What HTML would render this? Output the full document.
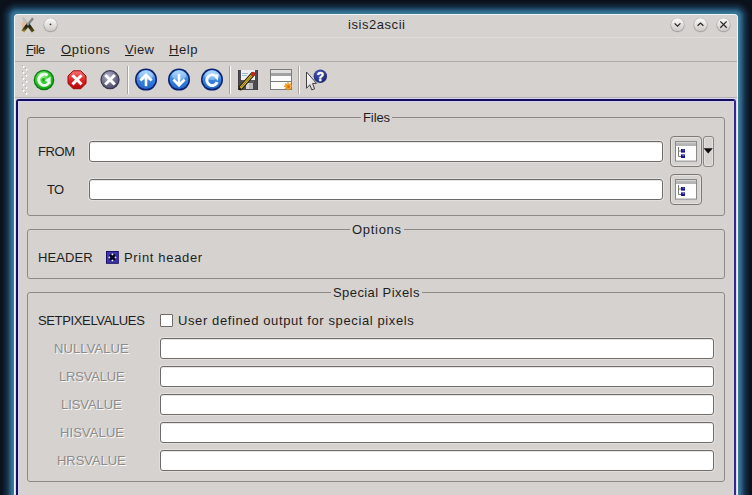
<!DOCTYPE html>
<html><head><meta charset="utf-8">
<style>
html,body{margin:0;padding:0;}
body{width:752px;height:495px;overflow:hidden;position:relative;background:#0b1119;font-family:"Liberation Sans",sans-serif;font-size:13px;color:#1e1e1e;}
.a{position:absolute;}
.t{position:absolute;white-space:nowrap;line-height:16px;height:16px;}
#win{left:14px;top:14px;width:724px;height:500px;box-sizing:border-box;background:#d6d2d0;border:1px solid #eef4f8;border-bottom:none;border-radius:4px 4px 0 0;}
.gb{position:absolute;border:1px solid #8d8985;border-radius:3px;}
.gt{position:absolute;background:#d6d2d0;padding:0 2px;white-space:nowrap;line-height:16px;}
.le{position:absolute;background:#fff;border:1px solid #6e6b68;border-radius:3px;box-sizing:border-box;box-shadow:0 0 0 1px #e2dfdd, inset 0 1px 0 #e6e6e6;}
.dis{color:#8e8a87;text-shadow:1px 1px 0 #fafafa;}
</style></head><body>
<!--glow-->
<div class="a" style="left:0;top:17px;width:14px;height:478px;background:linear-gradient(to left,#3c7a96 0.5px,#367294 1.5px,#30698a 2.5px,#2a5e80 3.5px,#235070 4.5px,#1c425e 5.5px,#183650 6.5px,#152c42 7.5px,#132638 8.5px,#112030 9.5px,#0f1a28 10.5px,#0d1622 11.5px,#0c131e 12.5px,#0b111a 13.5px)"></div>
<div class="a" style="left:738px;top:17px;width:14px;height:478px;background:linear-gradient(to right,#3c7a96 0.5px,#367294 1.5px,#30698a 2.5px,#2a5e80 3.5px,#235070 4.5px,#1c425e 5.5px,#183650 6.5px,#152c42 7.5px,#132638 8.5px,#112030 9.5px,#0f1a28 10.5px,#0d1622 11.5px,#0c131e 12.5px,#0b111a 13.5px)"></div>
<div class="a" style="left:17px;top:0;width:718px;height:14px;background:linear-gradient(to top,#3c7a96 0.5px,#367294 1.5px,#30698a 2.5px,#2a5e80 3.5px,#235070 4.5px,#1c425e 5.5px,#183650 6.5px,#152c42 7.5px,#132638 8.5px,#112030 9.5px,#0f1a28 10.5px,#0d1622 11.5px,#0c131e 12.5px,#0b111a 13.5px)"></div>
<div class="a" style="left:0;top:0;width:17px;height:17px;background:radial-gradient(circle at 17px 17px,#3c7a96 3.5px,#367294 4.5px,#30698a 5.5px,#2a5e80 6.5px,#235070 7.5px,#1c425e 8.5px,#183650 9.5px,#152c42 10.5px,#132638 11.5px,#112030 12.5px,#0f1a28 13.5px,#0d1622 14.5px,#0c131e 15.5px,#0b111a 16.5px)"></div>
<div class="a" style="left:735px;top:0;width:17px;height:17px;background:radial-gradient(circle at 0px 17px,#3c7a96 3.5px,#367294 4.5px,#30698a 5.5px,#2a5e80 6.5px,#235070 7.5px,#1c425e 8.5px,#183650 9.5px,#152c42 10.5px,#132638 11.5px,#112030 12.5px,#0f1a28 13.5px,#0d1622 14.5px,#0c131e 15.5px,#0b111a 16.5px)"></div>
<div id="win" class="a"></div>
<!-- window top edge highlight -->

<!-- title bar -->
<div class="a" style="left:15px;top:37px;width:722px;height:1px;background:#dfdcda;"></div>
<svg class="a" style="left:18px;top:15px" width="20" height="20" viewBox="0 0 20 20">
  <defs>
    <linearGradient id="xb" x1="0" y1="0" x2="0" y2="1"><stop offset="0" stop-color="#1c1c10"/><stop offset="0.55" stop-color="#3a3414"/><stop offset="1" stop-color="#b49a30"/></linearGradient>
    <linearGradient id="xa" x1="0" y1="0" x2="0" y2="1"><stop offset="0" stop-color="#161610"/><stop offset="1" stop-color="#5a5018"/></linearGradient>
  </defs>
  <ellipse cx="5.6" cy="10" rx="2" ry="3.4" fill="#f0ae80" opacity="0.65"/>
  <path d="M4.8 2.8 L10 9.5" stroke="#b8b0a8" stroke-width="2.4" opacity="0.6"/>
  <path d="M15 3.2 L10 9.5" stroke="#5a6262" stroke-width="2.2" opacity="0.7"/>
  <path d="M10 9.5 L15.2 16.6" stroke="url(#xa)" stroke-width="3.4"/>
  <path d="M10 9.5 L4.8 16.6" stroke="url(#xb)" stroke-width="3.4"/>
  <circle cx="10" cy="9.3" r="1.2" fill="#7c9aa4"/>
</svg>
<svg class="a" style="left:42px;top:17px" width="17" height="17" viewBox="0 0 17 17">
  <defs><linearGradient id="bg" x1="0" y1="0" x2="0" y2="1"><stop offset="0" stop-color="#fbfbfa"/><stop offset="1" stop-color="#cdc9c6"/></linearGradient></defs>
  <circle cx="8.5" cy="8.1" r="7.2" fill="#989592" opacity="0.7"/>
  <circle cx="8.5" cy="7.6" r="6.4" fill="url(#bg)"/>
  <circle cx="8.5" cy="7.3" r="0.9" fill="#333"/>
</svg>
<div class="t" style="left:348px;top:17px;letter-spacing:0.55px">isis2ascii</div>
<svg class="a" style="left:669px;top:17px" width="17" height="17" viewBox="0 0 17 17">
  <circle cx="8.5" cy="8.1" r="7.2" fill="#989592" opacity="0.7"/>
  <circle cx="8.5" cy="7.6" r="6.4" fill="url(#bg)"/>
  <path d="M5.6 6.4 L8.5 9.2 L11.4 6.4" stroke="#262626" stroke-width="1.25" fill="none"/>
</svg>
<svg class="a" style="left:692px;top:17px" width="17" height="17" viewBox="0 0 17 17">
  <circle cx="8.5" cy="8.1" r="7.2" fill="#989592" opacity="0.7"/>
  <circle cx="8.5" cy="7.6" r="6.4" fill="url(#bg)"/>
  <path d="M5.6 8.8 L8.5 6 L11.4 8.8" stroke="#262626" stroke-width="1.25" fill="none"/>
</svg>
<svg class="a" style="left:715px;top:17px" width="17" height="17" viewBox="0 0 17 17">
  <circle cx="8.5" cy="8.1" r="7.2" fill="#989592" opacity="0.7"/>
  <circle cx="8.5" cy="7.6" r="6.4" fill="url(#bg)"/>
  <path d="M5.3 4.4 L11.7 10.8 M11.7 4.4 L5.3 10.8" stroke="#262626" stroke-width="1.25" fill="none"/>
</svg>

<!-- menu bar -->
<div class="t" style="left:26px;top:42px;letter-spacing:-0.6px"><u>F</u>ile</div>
<div class="t" style="left:61px;top:42px;letter-spacing:0.67px"><u>O</u>ptions</div>
<div class="t" style="left:125px;top:42px;letter-spacing:0.33px"><u>V</u>iew</div>
<div class="t" style="left:169px;top:42px;letter-spacing:0.6px"><u>H</u>elp</div>
<div class="a" style="left:15px;top:61px;width:722px;height:1px;background:#b0aca9;"></div>

<!-- toolbar -->
<svg class="a" style="left:0;top:0" width="360" height="100" viewBox="0 0 360 100">
<defs>
 <radialGradient id="gG" cx="0.4" cy="0.3" r="0.7"><stop offset="0" stop-color="#9af29a"/><stop offset="0.5" stop-color="#3ad03a"/><stop offset="1" stop-color="#14a814"/></radialGradient>
 <linearGradient id="gR" x1="0" y1="0" x2="0" y2="1"><stop offset="0" stop-color="#f87070"/><stop offset="0.55" stop-color="#e02020"/><stop offset="1" stop-color="#b00808"/></linearGradient>
 <radialGradient id="gS" cx="0.4" cy="0.3" r="0.75"><stop offset="0" stop-color="#b4b4cc"/><stop offset="0.6" stop-color="#70708c"/><stop offset="1" stop-color="#4a4a64"/></radialGradient>
 <linearGradient id="gB" x1="0" y1="0" x2="0" y2="1"><stop offset="0" stop-color="#9ad0ff"/><stop offset="0.5" stop-color="#3a84dc"/><stop offset="1" stop-color="#2468c8"/></linearGradient>
 <radialGradient id="gQ" cx="0.4" cy="0.3" r="0.8"><stop offset="0" stop-color="#4a5ab8"/><stop offset="1" stop-color="#141c68"/></radialGradient>
 <linearGradient id="gF" x1="0" y1="0" x2="0" y2="1"><stop offset="0" stop-color="#505258"/><stop offset="1" stop-color="#2a2a2e"/></linearGradient>
</defs>
<rect x="22" y="65" width="1" height="1" fill="#a8a4a0"/><rect x="23" y="65" width="1" height="1" fill="#e4e2e0"/><rect x="22" y="66" width="1" height="1" fill="#e0dedc"/><rect x="23" y="66" width="1" height="2" fill="#ffffff"/><rect x="24" y="66" width="1" height="1" fill="#eceae8"/><rect x="25" y="68" width="1" height="1" fill="#a8a4a0"/><rect x="26" y="68" width="1" height="1" fill="#e4e2e0"/><rect x="25" y="69" width="1" height="1" fill="#e0dedc"/><rect x="26" y="69" width="1" height="2" fill="#ffffff"/><rect x="27" y="69" width="1" height="1" fill="#eceae8"/><rect x="22" y="71" width="1" height="1" fill="#a8a4a0"/><rect x="23" y="71" width="1" height="1" fill="#e4e2e0"/><rect x="22" y="72" width="1" height="1" fill="#e0dedc"/><rect x="23" y="72" width="1" height="2" fill="#ffffff"/><rect x="24" y="72" width="1" height="1" fill="#eceae8"/><rect x="25" y="74" width="1" height="1" fill="#a8a4a0"/><rect x="26" y="74" width="1" height="1" fill="#e4e2e0"/><rect x="25" y="75" width="1" height="1" fill="#e0dedc"/><rect x="26" y="75" width="1" height="2" fill="#ffffff"/><rect x="27" y="75" width="1" height="1" fill="#eceae8"/><rect x="22" y="77" width="1" height="1" fill="#a8a4a0"/><rect x="23" y="77" width="1" height="1" fill="#e4e2e0"/><rect x="22" y="78" width="1" height="1" fill="#e0dedc"/><rect x="23" y="78" width="1" height="2" fill="#ffffff"/><rect x="24" y="78" width="1" height="1" fill="#eceae8"/><rect x="25" y="80" width="1" height="1" fill="#a8a4a0"/><rect x="26" y="80" width="1" height="1" fill="#e4e2e0"/><rect x="25" y="81" width="1" height="1" fill="#e0dedc"/><rect x="26" y="81" width="1" height="2" fill="#ffffff"/><rect x="27" y="81" width="1" height="1" fill="#eceae8"/><rect x="22" y="83" width="1" height="1" fill="#a8a4a0"/><rect x="23" y="83" width="1" height="1" fill="#e4e2e0"/><rect x="22" y="84" width="1" height="1" fill="#e0dedc"/><rect x="23" y="84" width="1" height="2" fill="#ffffff"/><rect x="24" y="84" width="1" height="1" fill="#eceae8"/><rect x="25" y="86" width="1" height="1" fill="#a8a4a0"/><rect x="26" y="86" width="1" height="1" fill="#e4e2e0"/><rect x="25" y="87" width="1" height="1" fill="#e0dedc"/><rect x="26" y="87" width="1" height="2" fill="#ffffff"/><rect x="27" y="87" width="1" height="1" fill="#eceae8"/><rect x="22" y="89" width="1" height="1" fill="#a8a4a0"/><rect x="23" y="89" width="1" height="1" fill="#e4e2e0"/><rect x="22" y="90" width="1" height="1" fill="#e0dedc"/><rect x="23" y="90" width="1" height="2" fill="#ffffff"/><rect x="24" y="90" width="1" height="1" fill="#eceae8"/><rect x="25" y="92" width="1" height="1" fill="#a8a4a0"/><rect x="26" y="92" width="1" height="1" fill="#e4e2e0"/><rect x="25" y="93" width="1" height="1" fill="#e0dedc"/><rect x="26" y="93" width="1" height="2" fill="#ffffff"/><rect x="27" y="93" width="1" height="1" fill="#eceae8"/>
<!-- separators -->
<rect x="127" y="66" width="1" height="28" fill="#a8a4a0"/><rect x="128" y="66" width="1" height="28" fill="#fbfbfb"/>
<rect x="229" y="66" width="1" height="28" fill="#a8a4a0"/><rect x="230" y="66" width="1" height="28" fill="#fbfbfb"/>
<rect x="298" y="66" width="1" height="28" fill="#a8a4a0"/><rect x="299" y="66" width="1" height="28" fill="#fbfbfb"/>
<!-- green -->
<circle cx="44" cy="80" r="10.3" fill="#0a7c0e"/>
<circle cx="44" cy="80" r="9" fill="url(#gG)"/>
<path d="M47.6 75.2 A5.6 5.6 0 1 0 49.4 82.2" stroke="#eefcee" stroke-width="2.9" fill="none"/>
<path d="M44.8 80.2 L50.6 76.6 L50.6 84.4 Z" fill="#eefcee"/>
<circle cx="43.4" cy="79.8" r="1.9" fill="#22b022"/>
<!-- red octagon -->
<path d="M73.3 70.8 L80.7 70.8 L86 76 L86 83.5 L80.7 88.7 L73.3 88.7 L68 83.5 L68 76 Z" fill="url(#gR)" stroke="#9a0a0a" stroke-width="1"/>
<path d="M73.5 76.3 L80.5 83.3 M80.5 76.3 L73.5 83.3" stroke="#fff" stroke-width="3" stroke-linecap="square"/>
<!-- slate -->
<circle cx="110" cy="79.7" r="9.6" fill="#34344e"/>
<circle cx="110" cy="79.7" r="8.5" fill="url(#gS)"/>
<path d="M106.3 76 L113.7 83.4 M113.7 76 L106.3 83.4" stroke="#fff" stroke-width="3" stroke-linecap="square"/>
<!-- blue up -->
<circle cx="146" cy="79.6" r="11" fill="#0a2274"/>
<circle cx="146" cy="79.6" r="9.5" fill="url(#gB)"/>
<ellipse cx="146" cy="75.5" rx="7" ry="4.5" fill="#c8ecff" opacity="0.45"/>
<path d="M146 86.2 L146 76.5" stroke="#fff" stroke-width="2.6"/>
<path d="M140.4 80.6 L146 75 L151.6 80.6" stroke="#fff" stroke-width="2.8" fill="none"/>
<!-- blue down -->
<circle cx="179" cy="79.6" r="11" fill="#0a2274"/>
<circle cx="179" cy="79.6" r="9.5" fill="url(#gB)"/>
<ellipse cx="179" cy="75.5" rx="7" ry="4.5" fill="#c8ecff" opacity="0.45"/>
<path d="M179 73.8 L179 83.5" stroke="#fff" stroke-width="2.6"/>
<path d="M173.4 79.6 L179 85.2 L184.6 79.6" stroke="#fff" stroke-width="2.8" fill="none"/>
<!-- blue refresh -->
<circle cx="212" cy="79.6" r="11" fill="#0a2274"/>
<circle cx="212" cy="79.6" r="9.5" fill="url(#gB)"/>
<ellipse cx="212" cy="75.5" rx="7" ry="4.5" fill="#c8ecff" opacity="0.45"/>
<path d="M214.5 75.2 A5.4 5.4 0 1 0 217.2 82.2" stroke="#f2f8ff" stroke-width="3" fill="none"/>
<path d="M212.6 74.6 L218.6 74.2 L217.8 81 Z" fill="#f2f8ff"/>
<!-- floppy -->
<g shape-rendering="crispEdges">
<rect x="238" y="70" width="20" height="20" fill="#3c3c42"/>
<rect x="239" y="70" width="18" height="20" fill="#4a4a50"/>
<rect x="241" y="70" width="14" height="10" fill="#eef2f4"/>
<rect x="242" y="73" width="6" height="1" fill="#9ab8d8"/><rect x="242" y="75" width="5" height="1" fill="#9ab8d8"/>
<rect x="242" y="80" width="12" height="3" fill="#5a5a60"/>
<rect x="246" y="83" width="7" height="6" fill="#b8b8b8"/>
<rect x="246" y="83" width="3" height="6" fill="#d4d4d4"/>
</g>
<path d="M240.5 88 L252.5 74.5" stroke="#241e08" stroke-width="4.6" stroke-linecap="round"/>
<path d="M240.5 88 L252.5 74.5" stroke="#e0c030" stroke-width="2.6"/>
<path d="M240.8 87.6 L252.2 74.9" stroke="#6a5410" stroke-width="0.8"/>
<circle cx="253" cy="74" r="2.3" fill="#b82a1a"/>
<!-- form -->
<g shape-rendering="crispEdges">
<rect x="270" y="69" width="22" height="21" fill="#7c7c7c"/>
<rect x="271" y="70" width="20" height="19" fill="#fcfcfc"/>
<rect x="271" y="70" width="20" height="3" fill="#dedede"/>
<rect x="271" y="73" width="20" height="3" fill="#a2a2a2"/>
<rect x="271" y="81" width="20" height="1" fill="#7c7c7c"/>
</g>
<circle cx="288" cy="86.3" r="2.6" fill="#f29a18"/>
<path d="M288 82.3 L288 90.3 M284 86.3 L292 86.3 M285.2 83.5 L290.8 89.1 M290.8 83.5 L285.2 89.1" stroke="#f0a020" stroke-width="1.6"/>
<circle cx="288.5" cy="86.8" r="1.3" fill="#e06a10"/>
<!-- whats this -->
<defs><linearGradient id="gC" x1="0" y1="0" x2="1" y2="1"><stop offset="0" stop-color="#ffffff"/><stop offset="1" stop-color="#cfcfcf"/></linearGradient></defs>
<path d="M306.5 72 L316.5 83.3 L312.6 83.6 L314.6 88.8 L311.8 89.9 L309.8 84.8 L306.5 88.3 Z" fill="url(#gC)" stroke="#404040" stroke-width="1" stroke-linejoin="round"/>
<circle cx="320.3" cy="76.3" r="6.7" fill="url(#gQ)"/>
<text x="320.5" y="80.8" font-family="Liberation Sans" font-weight="bold" font-size="12" fill="#fff" stroke="#fff" stroke-width="0.5" text-anchor="middle">?</text>
</svg>
<div class="a" style="left:15px;top:97px;width:722px;height:1px;background:#b4b0ad;"></div>

<!-- main frame -->
<div class="a" style="left:15px;top:98px;width:722px;height:400px;box-sizing:border-box;border:1px solid #dcd6f6;"></div>
<div class="a" style="left:16px;top:99px;width:720px;height:400px;box-sizing:border-box;border:2px solid #120e5c;border-right-color:#34288a;border-radius:3px;"></div>
<div class="a" style="left:18px;top:101px;width:716px;height:400px;box-sizing:border-box;border:1px solid #d8d0f4;"></div>

<!-- Files group -->
<div class="gb" style="left:27px;top:117px;width:696px;height:97px;"></div>
<div class="gt" style="left:361px;top:110px;letter-spacing:-0.1px">Files</div>
<div class="t" style="left:38px;top:144px;letter-spacing:-0.4px">FROM</div>
<div class="le" style="left:89px;top:141px;width:574px;height:21px;"></div>

<div class="a" style="left:670px;top:136px;width:32px;height:31px;box-sizing:border-box;border:1px solid #7c7874;border-radius:4px;box-shadow:inset 0 0 0 1px #e4e1df;"></div>
<svg class="a" style="left:675px;top:141px" width="22" height="21" viewBox="0 0 22 21">
 <rect x="0.5" y="0.5" width="21" height="19.6" fill="#fdfdfd" stroke="#8a8a8a"/>
 <rect x="1" y="1" width="20" height="4" fill="#b4b4b4"/>
 <rect x="1" y="1" width="20" height="1.2" fill="#d0d0d0"/>
 <path d="M3.5 6 L3.5 15.5 M3.5 10 L6 10 M3.5 15.5 L6 15.5" stroke="#7a7a7a" stroke-width="1" fill="none"/>
 <rect x="6" y="8" width="4" height="3.6" fill="#16168e"/>
 <rect x="6" y="13.4" width="4" height="3.6" fill="#16168e"/>
 <rect x="7.5" y="8.5" width="2" height="1" fill="#6a7ae0"/>
 <rect x="7.5" y="13.9" width="2" height="1" fill="#6a7ae0"/>
</svg>
<div class="a" style="left:703px;top:136px;width:11px;height:31px;box-sizing:border-box;border:1px solid #8a8682;border-radius:3px;box-shadow:inset 0 0 0 1px #e2dfdd;"></div>
<svg class="a" style="left:703px;top:147px" width="11" height="8" viewBox="0 0 11 8"><path d="M0.6 1.2 L9.8 1.2 L5.2 6.4 Z" fill="#0c0c0c"/></svg>
<div class="a" style="left:670px;top:174px;width:32px;height:31px;box-sizing:border-box;border:1px solid #7c7874;border-radius:4px;box-shadow:inset 0 0 0 1px #e4e1df;"></div>
<svg class="a" style="left:675px;top:179px" width="22" height="21" viewBox="0 0 22 21">
 <rect x="0.5" y="0.5" width="21" height="19.6" fill="#fdfdfd" stroke="#8a8a8a"/>
 <rect x="1" y="1" width="20" height="4" fill="#b4b4b4"/>
 <rect x="1" y="1" width="20" height="1.2" fill="#d0d0d0"/>
 <path d="M3.5 6 L3.5 15.5 M3.5 10 L6 10 M3.5 15.5 L6 15.5" stroke="#7a7a7a" stroke-width="1" fill="none"/>
 <rect x="6" y="8" width="4" height="3.6" fill="#16168e"/>
 <rect x="6" y="13.4" width="4" height="3.6" fill="#16168e"/>
 <rect x="7.5" y="8.5" width="2" height="1" fill="#6a7ae0"/>
 <rect x="7.5" y="13.9" width="2" height="1" fill="#6a7ae0"/>
</svg>
<div class="t" style="left:47px;top:182px;letter-spacing:-0.8px">TO</div>
<div class="le" style="left:89px;top:179px;width:574px;height:21px;"></div>

<!-- Options group -->
<div class="gb" style="left:27px;top:229px;width:696px;height:48px;"></div>
<div class="gt" style="left:350px;top:222px;letter-spacing:0.7px">Options</div>
<div class="t" style="left:38px;top:250px;letter-spacing:0.1px">HEADER</div>
<svg class="a" style="left:106px;top:251px" width="13" height="13" viewBox="0 0 13 13">
 <rect x="0.5" y="0.5" width="11.8" height="11.8" fill="#3c34aa" stroke="#1a1266"/>
 <path d="M3.9 3.9 L8.9 8.9 M8.9 3.9 L3.9 8.9" stroke="#06061a" stroke-width="2.3"/>
 <circle cx="6.4" cy="3.3" r="0.85" fill="#fff"/><circle cx="6.4" cy="9.5" r="0.85" fill="#fff"/>
 <circle cx="3.3" cy="6.4" r="0.85" fill="#dcdcff"/><circle cx="9.5" cy="6.4" r="0.85" fill="#dcdcff"/>
</svg>
<div class="t" style="left:124px;top:250px;letter-spacing:0.67px">Print header</div>

<!-- Special Pixels group -->
<div class="gb" style="left:27px;top:292px;width:696px;height:188px;"></div>
<div class="gt" style="left:331px;top:285px;letter-spacing:0.42px">Special Pixels</div>
<div class="t" style="left:38px;top:313px;letter-spacing:-0.36px">SETPIXELVALUES</div>
<div class="a" style="left:160px;top:314px;width:11px;height:11px;background:#fff;border:1px solid #6e6a68;border-radius:1px;"></div>
<div class="t" style="left:178px;top:313px;letter-spacing:0.61px">User defined output for special pixels</div>

<div class="t dis" style="left:54px;top:341px;letter-spacing:0.1px">NULLVALUE</div>
<div class="le" style="left:160px;top:338px;width:554px;height:21px;"></div>
<div class="t dis" style="left:59px;top:369px;letter-spacing:-0.2px">LRSVALUE</div>
<div class="le" style="left:160px;top:366px;width:554px;height:21px;"></div>
<div class="t dis" style="left:61px;top:397px;letter-spacing:-0.06px">LISVALUE</div>
<div class="le" style="left:160px;top:394px;width:554px;height:21px;"></div>
<div class="t dis" style="left:60px;top:425px;letter-spacing:0.1px">HISVALUE</div>
<div class="le" style="left:160px;top:422px;width:554px;height:21px;"></div>
<div class="t dis" style="left:57px;top:453px;letter-spacing:-0.06px">HRSVALUE</div>
<div class="le" style="left:160px;top:450px;width:554px;height:21px;"></div>

</body></html>
